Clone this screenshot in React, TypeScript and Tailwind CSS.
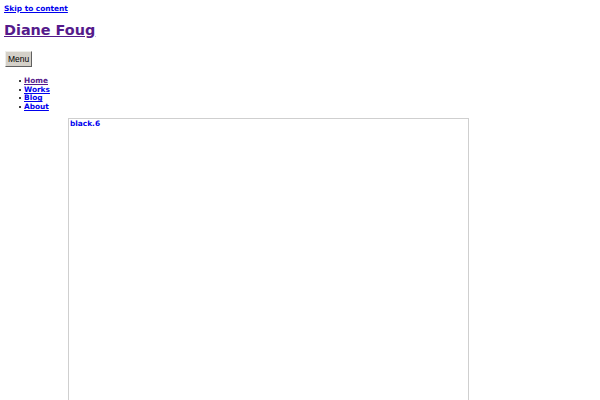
export default function App() {
  const items = [
    { label: "Home", color: "text-[#551a8b]" },
    { label: "Works", color: "text-[#0000ee]" },
    { label: "Blog", color: "text-[#0000ee]" },
    { label: "About", color: "text-[#0000ee]" },
  ];
  return (
    <div className="bg-white min-h-[400px] text-black" style={{ fontFamily: "'DejaVu Sans', sans-serif" }}>
      <div className="px-[4px] pt-[4px]">
        <a href="#content" className="text-[7.4px] leading-[10px] font-bold text-[#0000ee] underline block w-fit">Skip to content</a>
        <div className="mt-[4px]">
          <a href="#" className="text-[14.4px] leading-[18px] font-bold text-[#551a8b] underline">Diane Foug</a>
        </div>
        <button className="mt-[9px] ml-[1px] block h-[16px] px-[2px] bg-[#d4d0c8] border border-t-[#eeeeea] border-l-[#eeeeea] border-r-[#606060] border-b-[#606060] text-[8.5px] leading-[10px] text-black" style={{ fontFamily: "'Liberation Sans', Arial, sans-serif" }}>Menu</button>
        <ul className="mt-[10px] pl-[15px] list-none text-[7.4px] leading-[8.6px] font-bold">
          {items.map((it) => (
            <li key={it.label} className="flex items-center gap-[3px]">
              <span className="w-[2px] h-[2px] bg-black rounded-full shrink-0" />
              <a href="#" className={`${it.color} underline`}>{it.label}</a>
            </li>
          ))}
        </ul>
      </div>
      <div className="ml-[68px] mt-[7px] w-[401px] h-[290px] border border-[#cfcfcf] border-b-0">
        <div className="text-[7.4px] leading-[8px] font-bold text-[#0000ee] pl-[1px] pt-[1px]">black.6</div>
      </div>
    </div>
  );
}
